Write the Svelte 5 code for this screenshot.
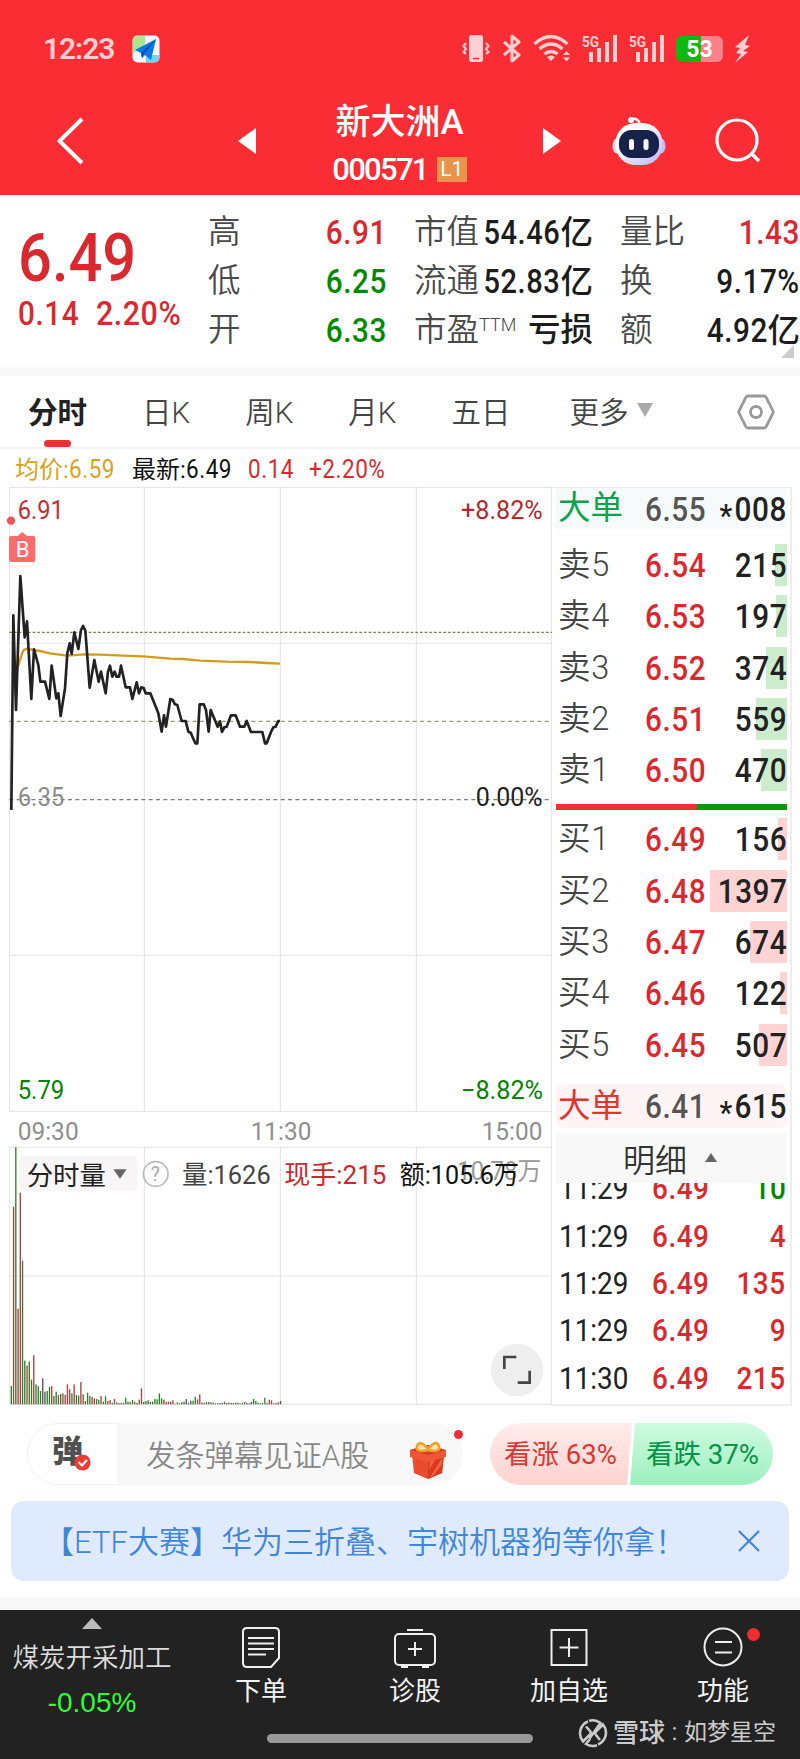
<script lang="ts">
  type Level = { label: string; price: string; volume: number };
  type Stat = { label: string; sup?: string; value: string; unit?: string; tone: string };

  const stats: Stat[][] = [
    [
      { label: "高", value: "6.91", tone: "up" },
      { label: "低", value: "6.25", tone: "down" },
      { label: "开", value: "6.33", tone: "down" },
    ],
    [
      { label: "市值", value: "54.46", unit: "亿", tone: "ink" },
      { label: "流通", value: "52.83", unit: "亿", tone: "ink" },
      { label: "市盈", sup: "TTM", value: "", unit: "亏损", tone: "ink" },
    ],
    [
      { label: "量比", value: "1.43", tone: "up" },
      { label: "换", value: "9.17%", tone: "ink" },
      { label: "额", value: "4.92", unit: "亿", tone: "ink" },
    ],
  ];

  const tabs = ["分时", "日K", "周K", "月K", "五日"];
  let activeTab = $state("分时");

  const asks: Level[] = [
    { label: "卖5", price: "6.54", volume: 215 },
    { label: "卖4", price: "6.53", volume: 197 },
    { label: "卖3", price: "6.52", volume: 374 },
    { label: "卖2", price: "6.51", volume: 559 },
    { label: "卖1", price: "6.50", volume: 470 },
  ];
  const bids: Level[] = [
    { label: "买1", price: "6.49", volume: 156 },
    { label: "买2", price: "6.48", volume: 1397 },
    { label: "买3", price: "6.47", volume: 674 },
    { label: "买4", price: "6.46", volume: 122 },
    { label: "买5", price: "6.45", volume: 507 },
  ];
  const maxVolume = Math.max(...asks.concat(bids).map((l) => l.volume));

  const trades = [
    { time: "11:29", volume: 10, tone: "down" },
    { time: "11:29", volume: 4, tone: "up" },
    { time: "11:29", volume: 135, tone: "up" },
    { time: "11:29", volume: 9, tone: "up" },
    { time: "11:30", volume: 215, tone: "up" },
  ];

  // chart canvas is drawn at 3x
  const priceLine =
    "34,990 40,406 48,690 61,288 74,472 81,424 94,657 102,508 115,555 121,605 135,605 148,657 155,557 169,655 175,640 182,708 195,625 202,520 209,490 215,522 223,457 235,507 243,450 249,438 256,452 269,623 283,540 296,605 303,575 317,640 324,575 330,557 337,590 344,575 350,590 357,590 363,557 377,622 390,622 397,657 410,607 417,640 424,622 431,624 437,640 451,640 475,700 485,755 492,706 498,740 511,657 518,660 525,673 532,675 545,723 557,723 565,755 572,758 586,790 592,790 599,673 611,673 618,690 626,755 632,690 653,740 660,724 666,756 673,742 680,740 693,706 707,706 720,740 733,740 740,723 753,756 787,756 795,790 800,790 813,756 820,742 827,740 835,723 840,723";
  const averageLine =
    "50,570 57,550 63,530 70,511 80,506 100,510 120,513 150,520 195,526 215,526 250,523 300,524 370,527 440,530 510,536 550,537 600,542 680,545 750,546 800,549 840,551";

  const volumes =
    "g55 r593 g771 r287 r635 g431 g131 r116 g128 g74 r147 g60 g55 g40 k78 k38 g40 g52 r55 g25 g38 r28 g31 r33 r28 r60 r45 g33 r60 g28 g26 r67 r30 g10 g35 g25 r22 r18 g16 g14 r25 g8 g24 r10 r13 g5 r16 g6 k4 r5 k5 g20 g8 g7 g13 r8 r4 g14 r48 k7 g10 k12 k7 g8 g16 g15 g33 g18 r14 r7 r8 k8 r12 k2 g6 k3 k6 k8 k16 k5 k11 g11 g23 r15 r30 k5 r5 g7 g7 k6 g5 k3 k3 k4 k4 r8 k4 r5 k4 k4 k5 k5 k3 k4 g7 k4 k3 k7 g16 k10 g5 k3 k4 g20 k4 r14 r12 k3 r4 k6 k10"
      .split(" ")
      .map((v, i) => ({ x: 34 + i * 6.73, side: v[0], h: Number(v.slice(1)) }));
</script>

{#snippet bar5g()}
  <svg width="36" height="30" viewBox="0 0 36 30" fill="#ffd0d2">
    <text x="0" y="13" font-size="15" font-weight="700" textLength="17" lengthAdjust="spacingAndGlyphs">5G</text>
    <rect x="7" y="18" width="4" height="10" /><rect x="15" y="14" width="4" height="14" />
    <rect x="23" y="8" width="4" height="20" /><rect x="31" y="1" width="4" height="27" />
  </svg>
{/snippet}

{#snippet level(row: Level, side: string)}
  <div class="level">
    <span class="level-label">{row.label}</span>
    <span class="level-price num up">{row.price}</span>
    <span class="level-volume">
      <i class="depth {side}" style="width: {(row.volume / maxVolume) * 77}px"></i>
      <b class="num right">{row.volume}</b>
    </span>
  </div>
{/snippet}

<div class="screen">
  <header>
    <div class="status">
      <span class="clock">12:23</span>
      <svg class="app-badge" width="28" height="28" viewBox="0 0 28 28">
        <rect x=".5" y=".5" width="27" height="27" rx="5" fill="#f1f7fb" />
        <path d="M5 1h8v10L1 18V5q0-4 4-4z" fill="#a7e88c" />
        <path d="M14 20h13v3q0 4-4 4h-9z" fill="#66d5fa" />
        <path d="M24 4 3 15l6 3 1 5 3-3 6 5z" fill="#0b78e8" />
        <path d="M24 4 9 18l1 5 2-4z" fill="#0750b6" />
      </svg>
      <div class="status-icons">
        <svg width="30" height="30" viewBox="0 0 30 30">
          <rect x="8" y="1" width="14" height="27" rx="2.5" fill="#ffd0d2" />
          <path d="M12 24.500h6" stroke="#fb2d34" stroke-width="1.500" />
          <path d="M5 9 2.500 12 5 15 2.500 18 5 20M25 9l2.500 3-2.500 3 2.500 3-2.500 2" fill="none" stroke="#ffd0d2" stroke-width="2" />
        </svg>
        <svg width="20" height="30" viewBox="0 0 20 30">
          <path d="M2 8l15 13-7 6V2l7 6L2 21" fill="none" stroke="#ffd0d2" stroke-width="3" stroke-linejoin="round" />
        </svg>
        <svg width="38" height="30" viewBox="0 0 38 30">
          <path d="M1.500 10q16-15 33 0M6.500 15q11.500-10 23 0M11.500 20q6.500-5 13 0" fill="none" stroke="#ffd0d2" stroke-width="3.200" />
          <path d="M14 23q4-3 8 0l-4 4z" fill="#ffd0d2" />
          <path d="M30 21l3.500-4 3.500 4zM30 23.500l3.500 4 3.500-4z" fill="#ffd0d2" />
        </svg>
        {@render bar5g()}
        {@render bar5g()}
        <div class="battery"><span>53</span></div>
        <svg width="18" height="30" viewBox="0 0 18 30">
          <path d="M15 1 1 13l5 1-4 5 5 1-6 9 13-11-5-1 7-5-5-1z" fill="#ffd0d2" />
        </svg>
      </div>
    </div>

    <div class="titlebar">
      <svg class="back" width="28" height="48" viewBox="0 0 28 48">
        <path d="M25 2 2.500 24 25 46" fill="none" stroke="#fff" stroke-width="4" />
      </svg>
      <svg class="prev" width="18" height="26" viewBox="0 0 18 26"><path d="M18 0v26L0 13z" fill="#fff" /></svg>
      <div class="title">
        <h1>新大洲A</h1>
        <div class="code"><span class="code-num">000571</span><span class="tag">L1</span></div>
      </div>
      <svg class="next" width="18" height="26" viewBox="0 0 18 26"><path d="M0 0v26l18-13z" fill="#fff" /></svg>
      <svg class="robot" width="54" height="50" viewBox="0 0 54 50">
        <defs>
          <linearGradient id="shell" x1="0" y1="0" x2="1" y2="1">
            <stop offset=".3" stop-color="#fff" /><stop offset="1" stop-color="#b9b4fa" />
          </linearGradient>
        </defs>
        <path d="M20 3q7-1 8 6" fill="none" stroke="#fff" stroke-width="2.500" />
        <circle cx="19" cy="4" r="3" fill="#fff" />
        <ellipse cx="5" cy="30" rx="4.500" ry="7.500" fill="#dcdcff" /><ellipse cx="49" cy="30" rx="4.500" ry="7.500" fill="#c3befa" />
        <rect x="3.500" y="7" width="47" height="42" rx="20" fill="url(#shell)" />
        <rect x="7" y="14" width="40" height="28" rx="12.500" fill="#16224a" />
        <rect x="17" y="23" width="5" height="11" rx="2.500" fill="#fff" /><rect x="31.500" y="23" width="5" height="11" rx="2.500" fill="#fff" />
      </svg>
      <svg class="search" width="46" height="46" viewBox="0 0 46 46">
        <circle cx="22" cy="22" r="20" fill="none" stroke="#fff" stroke-width="3.200" />
        <path d="M36 35l8 8" stroke="#fff" stroke-width="3.500" />
      </svg>
    </div>
  </header>

  <section class="quote">
    <div class="last up">
      <div class="last-price num">6.49</div>
      <div class="last-change"><span class="num">0.14</span><span class="num">2.20%</span></div>
    </div>
    {#each stats as column, i}
      <div class="stat-col c{i}">
        {#each column as s}
          <div class="stat">
            <span class="stat-label">{s.label}{#if s.sup}<sup>{s.sup}</sup>{/if}</span>
            <span class="stat-value {s.tone}">{#if s.value}<span class="num right">{s.value}</span>{/if}{s.unit ?? ""}</span>
          </div>
        {/each}
      </div>
    {/each}
    <i class="corner"></i>
  </section>

  <nav class="tabs">
    {#each tabs as tab}
      <button class:active={tab === activeTab} onclick={() => (activeTab = tab)}>{tab}</button>
    {/each}
    <button class="more">更多<i></i></button>
    <svg class="settings" width="38" height="36" viewBox="0 0 38 36" fill="none" stroke="#999" stroke-width="2.800">
      <path d="M11 2h16q1.500 0 2.200 1.300L36 17q.5 1 0 2l-6.800 13.700Q28.500 34 27 34H11q-1.500 0-2.200-1.300L2 19q-.5-1 0-2L8.800 3.300Q9.500 2 11 2z" />
      <circle cx="19" cy="18" r="5.500" />
    </svg>
  </nav>

  <div class="legend">
    <span class="avg">均价:<b class="num">6.59</b></span>
    <span class="latest">最新:<b class="num">6.49</b></span>
    <span class="delta num up">0.14</span>
    <span class="num up">+2.20%</span>
  </div>

  <main>
    <svg class="chart" width="552" height="928" viewBox="0 0 1656 2784">
      <g stroke="#e3e3e3" stroke-width="3" fill="none">
        <path d="M28 22H1656M28 490H1656M28 1426H1656M28 1894H1656M28 2002H1656M28 2388H1656M28 2773H1656" />
        <path d="M29 22V1894M433 22V1894M841 22V1894M1249 22V1894M29 2002V2773M433 2002V2773M841 2002V2773M1249 2002V2773" />
        <path d="M1654 22V2773" />
      </g>
      <path d="M28 457H1656" stroke="#857b4c" stroke-width="4" stroke-dasharray="8 6" />
      <path d="M28 724H1656" stroke="#a0987c" stroke-width="4" stroke-dasharray="12 10" />
      <path d="M28 959H1656" stroke="#7c7c74" stroke-width="4" stroke-dasharray="12 10" />
      <polyline points={averageLine} fill="none" stroke="#d69a1e" stroke-width="7" stroke-linejoin="round" />
      <polyline points={priceLine} fill="none" stroke="#222" stroke-width="8" stroke-linejoin="round" />

      <circle cx="33" cy="122" r="12.500" fill="#f0555a" />
      <path d="M33 168h20l14-12 14 12h19q6 0 6 6v66q0 6-6 6H33q-6 0-6-6v-66q0-6 6-6z" fill="#f96c6c" />
      <text x="47" y="231" font-size="66" fill="#fff" textLength="41" lengthAdjust="spacingAndGlyphs">B</text>

      <g font-size="78">
        <text x="53" y="118" fill="#c32d31" textLength="138" lengthAdjust="spacingAndGlyphs">6.91</text>
        <text x="1383" y="118" fill="#b5262b" textLength="245" lengthAdjust="spacingAndGlyphs">+8.82%</text>
        <text x="53" y="977" fill="#8c8c8c" textLength="140" lengthAdjust="spacingAndGlyphs">6.35</text>
        <text x="1427" y="977" fill="#222" textLength="201" lengthAdjust="spacingAndGlyphs">0.00%</text>
        <text x="53" y="1857" fill="#008200" textLength="140" lengthAdjust="spacingAndGlyphs">5.79</text>
        <text x="1383" y="1857" fill="#008200" textLength="246" lengthAdjust="spacingAndGlyphs">−8.82%</text>
      </g>
      <g font-size="77" fill="#8f8f8f">
        <text x="53" y="1979" textLength="183" lengthAdjust="spacingAndGlyphs">09:30</text>
        <text x="752" y="1979" textLength="182" lengthAdjust="spacingAndGlyphs">11:30</text>
        <text x="1445" y="1979" textLength="182" lengthAdjust="spacingAndGlyphs">15:00</text>
      </g>

      {#each volumes as v}
        <rect class="vol-{v.side}" x={v.x - 2} y={2773 - v.h} width="4" height={v.h} />
      {/each}

      <rect x="57" y="2028" width="355" height="104" rx="12" fill="#f7f5f6" />
      <path d="M340 2068h40l-20 28z" fill="#666" />
      <circle cx="467" cy="2082" r="37" fill="none" stroke="#bbb" stroke-width="5" />
      <text x="452" y="2103" font-size="58" fill="#aaa">?</text>
      <text x="1372" y="2100" font-size="76" fill="#999" textLength="252" lengthAdjust="spacingAndGlyphs">10.78万</text>
      <g font-size="78">
        <text x="80" y="2115" fill="#222" textLength="238" lengthAdjust="spacingAndGlyphs">分时量</text>
        <text x="546" y="2113" fill="#444" textLength="266" lengthAdjust="spacingAndGlyphs">量:1626</text>
        <text x="853" y="2113" fill="#c9282d" textLength="306" lengthAdjust="spacingAndGlyphs">现手:215</text>
        <text x="1199" y="2113" fill="#111" textLength="358" lengthAdjust="spacingAndGlyphs">额:105.6万</text>
      </g>

      <circle cx="1551" cy="2670" r="79" fill="#eeeeef" />
      <path d="M1513 2667v-36h36M1589 2672v36h-36" fill="none" stroke="#444" stroke-width="8" />
    </svg>

    <aside class="book">
      <div class="block ask">
        <span>大单</span><b class="num">6.55</b><em class="num right"><u>*</u>008</em>
      </div>
      <div class="levels">
        {#each asks as row}{@render level(row, "sell")}{/each}
      </div>
      <div class="ratio"><i></i></div>
      <div class="levels">
        {#each bids as row}{@render level(row, "buy")}{/each}
      </div>
      <div class="block bid">
        <span>大单</span><b class="num">6.41</b><em class="num right"><u>*</u>615</em>
      </div>
      <div class="detail">明细<i></i></div>
      <div class="trades">
        {#each trades as t}
          <div class="trade">
            <span class="time num">{t.time}</span>
            <span class="num up">6.49</span>
            <span class="num right {t.tone}">{t.volume}</span>
          </div>
        {/each}
      </div>
    </aside>
  </main>

  <div class="social">
    <div class="danmu">
      <div class="danmu-toggle">
        <span>弹</span>
        <svg width="17" height="17" viewBox="0 0 17 17">
          <circle cx="8.500" cy="8.500" r="8" fill="#ee3b32" />
          <path d="M4.500 8 8 11.500 13 6" fill="none" stroke="#fff" stroke-width="2" />
        </svg>
      </div>
      <div class="danmu-input">
        <span>发条弹幕见证A股</span>
        <svg width="38" height="40" viewBox="0 0 38 40">
          <path d="M3 14l16 5 16-5-2 19-14 6-14-6z" fill="#ea4a2d" />
          <path d="M19 19l16-5-2 19-14 6z" fill="#d9391f" />
          <path d="M33 18 21 37l4-2 8-11zM28 17l-8 13 1-10z" fill="#f3603c" />
          <path d="M1 10l17-5 19 5v7l-18 5-18-5z" fill="#f25536" />
          <path d="M1 10l17-5 19 5-18 5z" fill="#d93a28" />
          <path d="M19 10Q6 13 8 6q3-7 11 3 8-10 11-3 2 7-11 4z" fill="#ffe6a0" stroke="#eda32b" stroke-width="2.500" />
        </svg>
        <i class="dot"></i>
      </div>
    </div>
    <div class="poll">
      <div class="bull">看涨 63%</div>
      <div class="bear">看跌 37%</div>
    </div>
  </div>

  <div class="banner">
    <span>【ETF大赛】华为三折叠、宇树机器狗等你拿！</span>
    <svg width="22" height="22" viewBox="0 0 22 22"><path d="M1 1l20 20M21 1 1 21" stroke="#3f86d8" stroke-width="2.200" /></svg>
  </div>

  <footer>
    <div class="sector">
      <i></i>
      <span>煤炭开采加工</span>
      <b>-0.05%</b>
    </div>
    <div class="action">
      <svg width="44" height="44" viewBox="0 0 44 44" fill="none" stroke="#eee" stroke-width="2">
        <path d="M8 2h28q4 0 4 4v26l-8 9H8q-4 0-4-4V6q0-4 4-4z" />
        <path d="M9 12h26M9 17.500h26M9 23h26M9 28.500h18" />
      </svg>
      <span>下单</span>
    </div>
    <div class="action">
      <svg width="44" height="44" viewBox="0 0 44 44" fill="none" stroke="#eee" stroke-width="2">
        <rect x="2" y="8" width="40" height="31" rx="4" />
        <path d="M14 4h16M8 41h7M29 41h7M22 16v14M15 23h14" />
      </svg>
      <span>诊股</span>
    </div>
    <div class="action">
      <svg width="44" height="44" viewBox="0 0 44 44" fill="none" stroke="#eee" stroke-width="2">
        <rect x="4.500" y="4" width="35" height="35" /><path d="M22 12v19M12.500 21.500h19" />
      </svg>
      <span>加自选</span>
    </div>
    <div class="action">
      <svg width="44" height="44" viewBox="0 0 44 44" fill="none" stroke="#eee" stroke-width="2">
        <circle cx="22" cy="21" r="18.500" /><path d="M14 16h17M14 26.500h17" />
      </svg>
      <span>功能</span>
      <i class="dot"></i>
    </div>
    <i class="home-bar"></i>
    <div class="watermark">
      <svg width="30" height="30" viewBox="0 0 30 30" fill="none" stroke="#c9c9c9" stroke-width="2.600">
        <path d="M10 3.500A12.800 12.800 0 0 0 5 23.500L12 16.500q1.500-1.500 0-3.500L8 8.500M11 2.800A12.800 12.800 0 0 1 22.500 5L11.500 20.500M20 26.500A12.800 12.800 0 0 0 25 6.500L18 13.500q-1.500 1.500 0 3.500l4 5M19 27.200A12.800 12.800 0 0 1 8 26l4-5" />
      </svg>
      <b>雪球</b><span class="colon">:</span><span>如梦星空</span>
    </div>
  </footer>
</div>

<style>
  :global(body) {
    background: #fff;
  }
  .screen {
    width: 800px;
    height: 1759px;
    overflow: hidden;
    display: flex;
    flex-direction: column;
    background: #fff;
    color: #222;
    font-family: Roboto, "Noto Sans CJK SC", sans-serif;
  }
  svg {
    display: block;
    flex: none;
  }
  .screen i,
  .screen em {
    font-style: normal;
  }
  .num {
    display: inline-block;
    font-weight: 500;
    letter-spacing: 0.6px;
    transform: scaleX(0.9);
    transform-origin: left center;
  }
  .num.right {
    transform-origin: right center;
  }
  .up {
    color: #d9292f;
  }
  .down {
    color: #008a00;
  }
  .ink {
    color: #1c1c1c;
  }

  header {
    height: 195px;
    flex: none;
    background: #fb2d34;
    color: #fff;
  }
  .status {
    height: 97px;
    display: flex;
    align-items: center;
    padding: 0 48px 0 43px;
  }
  .clock {
    width: 89px;
    font-size: 30px;
    font-weight: 600;
    letter-spacing: -1.1px;
    color: #ffd0d2;
  }
  .status-icons {
    margin-left: auto;
    display: flex;
    align-items: center;
    gap: 11px;
  }
  .battery {
    width: 47px;
    height: 26px;
    border-radius: 6px;
    background: linear-gradient(90deg, #0cb90c 54%, #ff8187 54%);
    text-align: center;
    font-size: 23px;
    font-weight: 700;
    line-height: 27px;
  }
  .titlebar {
    display: flex;
    align-items: center;
    height: 88px;
    padding-left: 57px;
  }
  .prev {
    margin-left: 153px;
  }
  .title {
    width: 287px;
    display: flex;
    flex-direction: column;
    align-items: center;
    padding-top: 9px;
  }
  h1 {
    margin: 0;
    font-size: 35px;
    font-weight: 500;
    line-height: 48px;
  }
  .code {
    display: flex;
    align-items: center;
    gap: 9px;
    line-height: 46px;
    height: 46px;
  }
  .code-num {
    font-size: 31px;
    font-weight: 500;
    letter-spacing: -1.7px;
  }
  .tag {
    width: 30px;
    background: #e9944a;
    font-size: 21px;
    line-height: 25px;
    text-align: center;
  }
  .robot {
    margin-left: 51px;
  }
  .search {
    margin-left: 49px;
  }

  .quote {
    position: relative;
    height: 172px;
    flex: none;
    display: flex;
    box-sizing: border-box;
    padding-top: 13px;
  }
  .last {
    width: 208px;
    padding-left: 18px;
    box-sizing: border-box;
  }
  .last-price {
    margin-top: 11px;
    font-size: 67px;
    line-height: 78px;
    letter-spacing: 0;
    transform: scaleX(0.89);
  }
  .last-change {
    display: flex;
    font-size: 33px;
    line-height: 34px;
  }
  .last-change span + span {
    margin-left: 10px;
    transform: scaleX(0.92);
  }
  .stat-col {
    display: flex;
    flex-direction: column;
  }
  .c0 {
    width: 179px;
  }
  .c1 {
    width: 179px;
    margin-left: 27px;
  }
  .c2 {
    width: 180px;
    margin-left: 27px;
  }
  .stat {
    display: flex;
    justify-content: space-between;
    height: 49px;
    line-height: 49px;
    font-size: 32.5px;
    white-space: nowrap;
  }
  .stat-label {
    font-weight: 350;
    color: #4a4a4a;
  }
  .stat-value {
    font-weight: 500;
  }
  .stat-value .num {
    font-size: 33px;
    margin-left: -12px;
  }
  .c1 .num {
    transform: scaleX(0.88);
  }
  sup {
    font-size: 18px;
    line-height: 1;
    vertical-align: 10px;
  }
  .corner {
    position: absolute;
    right: 6px;
    bottom: 9px;
    border: solid transparent;
    border-width: 0 0 13px 13px;
    border-bottom-color: #ccc;
  }

  .tabs {
    height: 71px;
    flex: none;
    display: flex;
    align-items: center;
    border-top: 9px solid #f8f8f8;
    border-bottom: 2px solid #f2f2f2;
    padding-left: 28px;
  }
  .tabs button {
    position: relative;
    height: 71px;
    padding: 0 0 3px;
    margin-right: 55px;
    border: 0;
    background: none;
    font: 350 29.5px Roboto, "Noto Sans CJK SC", sans-serif;
    color: #444;
  }
  .tabs button.active {
    font-weight: 700;
    color: #222;
  }
  .tabs button.active::after {
    content: "";
    position: absolute;
    left: 16px;
    bottom: 0;
    width: 27px;
    height: 7px;
    border-radius: 4px;
    background: #ee2f33;
  }
  .tabs .more {
    display: flex;
    align-items: center;
    gap: 9px;
    margin: 0 0 0 4px;
  }
  .more i {
    border: 8px solid transparent;
    border-top: 14px solid #aaa;
    border-bottom: 0;
  }
  .settings {
    margin: 0 25px 0 auto;
  }

  .legend {
    height: 31px;
    flex: none;
    display: flex;
    align-items: center;
    padding: 5px 0 0 15px;
    margin-bottom: -5px;
    font-size: 24px;
    line-height: 31px;
  }
  .legend .num {
    font-weight: 400;
    font-size: 25px;
  }
  .avg {
    width: 117px;
    color: #d9a21c;
  }
  .latest {
    width: 116px;
    color: #111;
  }
  .delta {
    width: 61px;
  }

  main {
    display: flex;
    height: 928px;
    flex: none;
  }
  .chart text {
    font-family: Roboto, "Noto Sans CJK SC", sans-serif;
  }
  .vol-r {
    fill: #a84040;
  }
  .vol-g {
    fill: #2f7f28;
  }
  .vol-k {
    fill: #555;
  }
  .book {
    box-sizing: border-box;
    width: 240px;
    height: 919px;
    margin-top: 7px;
    padding: 0 3px 0 4px;
    border: solid #eee;
    border-width: 1px 2px 2px 0;
    font-size: 33px;
  }
  .block {
    display: grid;
    grid-template-columns: 87px minmax(0, 1fr) auto;
    height: 41px;
    line-height: 44px;
    padding-left: 2px;
  }
  .block span {
    font-size: 32.5px;
    line-height: 41px;
  }
  .block b {
    color: #555;
  }
  .block u {
    display: inline-block;
    text-decoration: none;
    font-size: 32px;
    line-height: 1;
    margin-right: 2px;
    transform: translateY(5px);
  }
  .ask {
    background: #f6fafa;
    margin-bottom: 10px;
  }
  .ask span {
    color: #09a34c;
  }
  .bid {
    background: #fff4f5;
    border-radius: 8px;
    height: 44px;
    margin: 14px 0 5px;
    line-height: 46px;
  }
  .bid span {
    color: #e0352f;
    line-height: 45px;
  }
  .level {
    display: grid;
    grid-template-columns: 87px minmax(0, 1fr) 78px;
    height: 51.3px;
    line-height: 53px;
    padding-left: 2px;
  }
  .level-label {
    font-size: 32.5px;
    line-height: 53px;
    font-weight: 350;
    color: #444;
    letter-spacing: 0.8px;
  }
  .level-volume {
    position: relative;
    text-align: right;
  }
  .level-volume b {
    position: relative;
  }
  .depth {
    position: absolute;
    right: 0;
    top: 5px;
    height: 42px;
  }
  .sell {
    background: #cdebcd;
  }
  .buy {
    background: #ffd3d4;
  }
  .ratio {
    height: 6px;
    margin: 9px 0 3px;
    background: #069a06;
  }
  .ratio i {
    display: block;
    width: 141px;
    height: 6px;
    background: #ec3137;
  }
  .detail {
    display: flex;
    justify-content: center;
    align-items: center;
    gap: 18px;
    height: 50px;
    padding-right: 3px;
    background: #f8f8f8;
    color: #333;
    font-size: 32px;
    font-weight: 350;
  }
  .detail i {
    border: 6.5px solid transparent;
    border-top: 0;
    border-bottom: 9px solid #666;
  }
  .trades {
    height: 221px;
    display: flex;
    flex-direction: column;
    justify-content: flex-end;
    overflow: hidden;
  }
  .trade {
    flex: none;
    display: grid;
    grid-template-columns: 93px 1fr auto;
    height: 47.3px;
    line-height: 43px;
    font-size: 31px;
    padding: 0 1px 0 3px;
  }
  .time {
    font-weight: 400;
    letter-spacing: 0;
  }

  .social {
    display: flex;
    height: 62px;
    flex: none;
    margin: 15px 27px 0;
  }
  .danmu {
    display: flex;
    width: 436px;
    margin-right: 27px;
  }
  .danmu-toggle {
    position: relative;
    box-sizing: border-box;
    width: 92px;
    border: 1px solid #f1f1f1;
    border-radius: 31px 0 0 31px;
    padding-left: 24px;
    font-size: 31px;
    font-weight: 900;
    line-height: 55px;
    color: #505050;
  }
  .danmu-toggle svg {
    position: absolute;
    left: 46px;
    top: 30px;
  }
  .danmu-input {
    position: relative;
    flex: 1;
    display: flex;
    align-items: center;
    justify-content: space-between;
    padding: 0 16px 0 27px;
    border-radius: 0 31px 31px 0;
    background: #f8f8f8;
    color: #888;
    font-size: 29.3px;
    font-weight: 350;
  }
  .danmu-input span {
    margin-top: -2px;
  }
  .danmu-input svg {
    margin-top: 12px;
  }
  .dot {
    position: absolute;
    width: 9px;
    height: 9px;
    border-radius: 50%;
    background: #ee2d30;
  }
  .danmu-input .dot {
    right: 0;
    top: 7px;
  }
  .poll {
    display: flex;
    width: 283px;
    border-radius: 31px;
    overflow: hidden;
    font-size: 27.5px;
    line-height: 63px;
    white-space: nowrap;
  }
  .bull {
    width: 142px;
    box-sizing: border-box;
    padding-left: 14px;
    background: linear-gradient(#ffeceb, #ffd3d0);
    color: #d63a35;
    clip-path: polygon(0 0, 100% 0, 137px 100%, 0 100%);
  }
  .bear {
    flex: 1;
    padding-left: 16px;
    margin-left: -2px;
    background: linear-gradient(#d0fbe0, #9cefbf);
    color: #079347;
    clip-path: polygon(5px 0, 100% 0, 100% 100%, 0 100%);
  }

  .banner {
    display: flex;
    align-items: center;
    justify-content: space-between;
    box-sizing: border-box;
    height: 80px;
    flex: none;
    margin: 16px 11px 17px;
    padding: 0 29px 0 32px;
    border-radius: 13px;
    background: #dfebfd;
    color: #3f86d8;
    font-size: 31px;
    font-weight: 350;
    white-space: nowrap;
  }
  .banner span {
    margin-top: -4px;
  }

  footer {
    position: relative;
    display: flex;
    flex: 1;
    border-top: 12px solid #f8f8f8;
    background: #222;
    color: #f2f2f2;
    background-clip: padding-box;
    font-size: 26px;
  }
  .sector {
    width: 184px;
    display: flex;
    flex-direction: column;
    align-items: center;
    font-weight: 350;
  }
  .sector i {
    margin-top: 8px;
    border: 10px solid transparent;
    border-top: 0;
    border-bottom: 11px solid #bbb;
  }
  .sector span {
    font-size: 26.5px;
    line-height: 40px;
    margin-top: 9px;
    color: #ddd;
  }
  .sector b {
    font-family: "Liberation Sans", sans-serif;
    font-size: 28px;
    font-weight: 400;
    line-height: 40px;
    margin-top: 5px;
    color: #2cff35;
  }
  .action {
    position: relative;
    width: 154px;
    display: flex;
    flex-direction: column;
    align-items: center;
    padding-top: 16px;
  }
  .action span {
    margin-top: 1px;
    line-height: 40px;
  }
  .action .dot {
    width: 13px;
    height: 13px;
    top: 18px;
    left: 101px;
  }
  .home-bar {
    position: absolute;
    left: 267px;
    top: 124px;
    width: 266px;
    height: 9px;
    border-radius: 5px;
    background: #999;
  }
  .watermark {
    position: absolute;
    left: 578px;
    top: 108px;
    display: flex;
    align-items: center;
    color: #ccc;
    font-size: 23px;
    line-height: 30px;
    white-space: nowrap;
  }
  .watermark b {
    margin-left: 5px;
    font-size: 26px;
    font-weight: 500;
  }
  .colon {
    width: 19px;
    text-align: center;
  }
</style>
